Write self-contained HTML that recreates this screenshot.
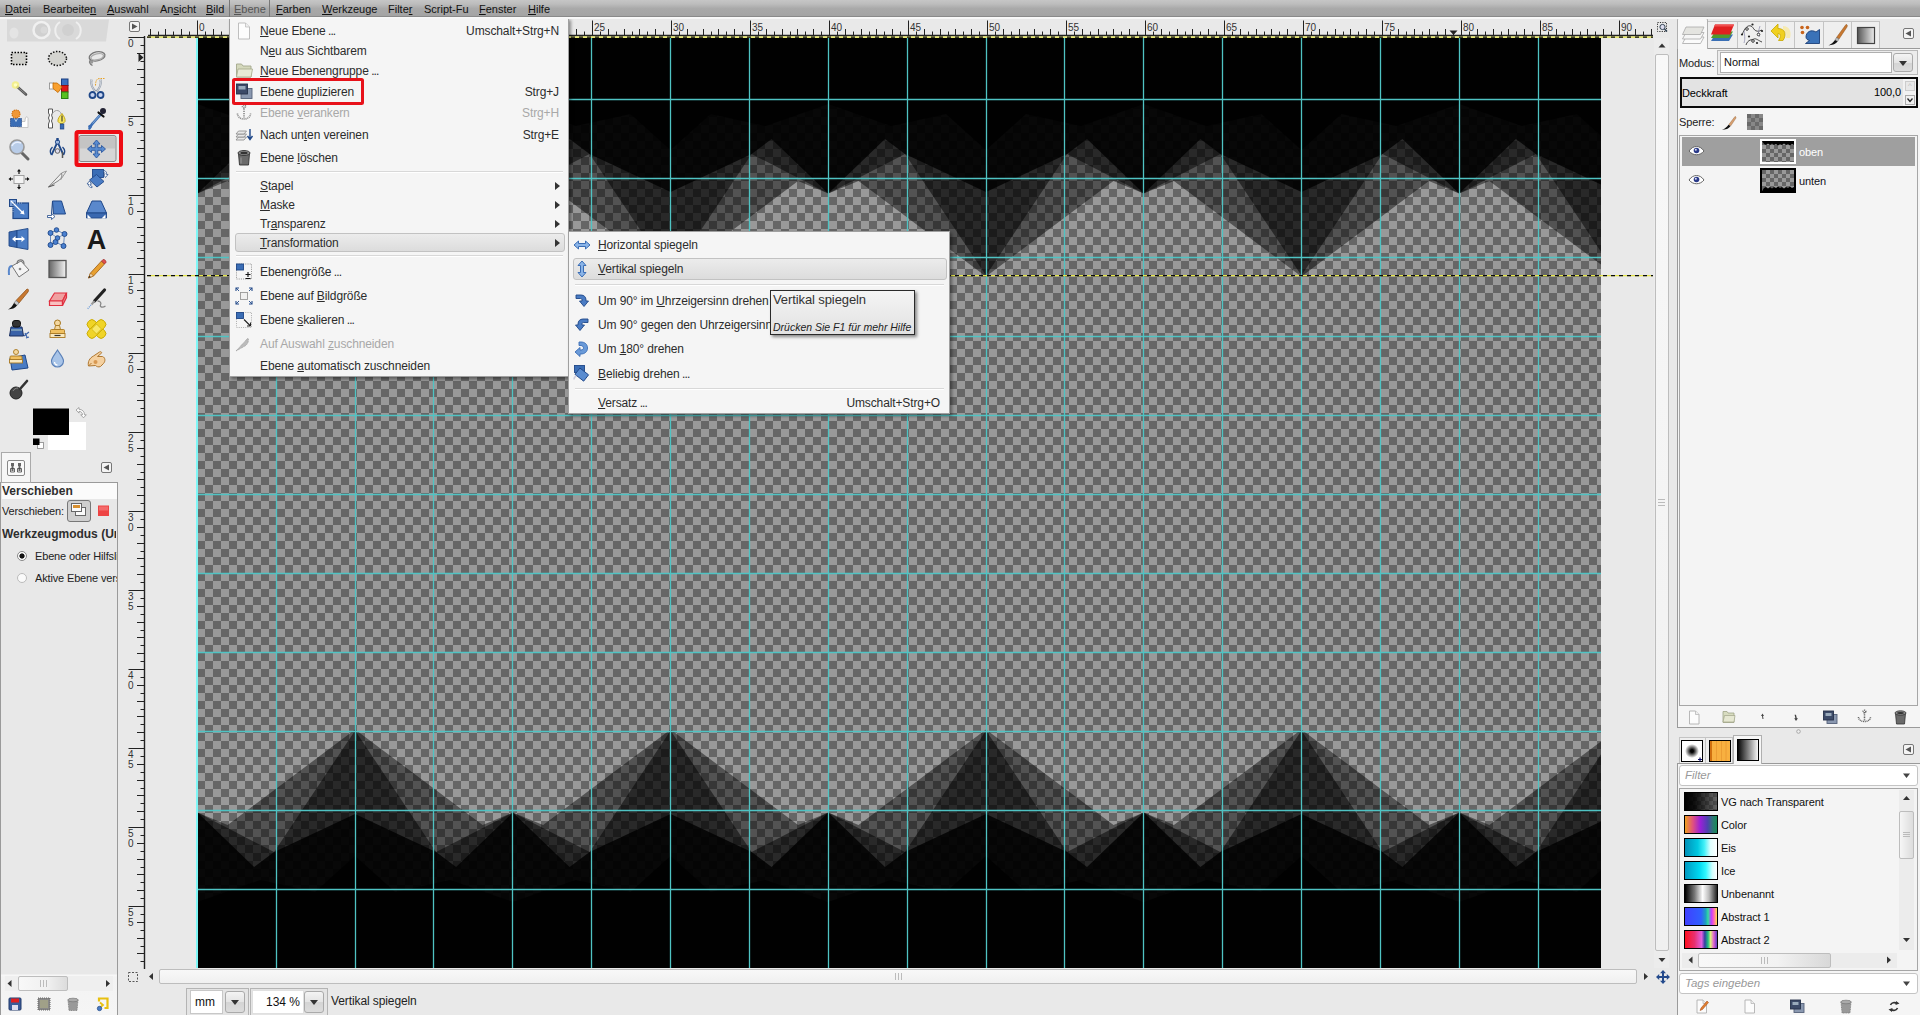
<!DOCTYPE html><html><head><meta charset="utf-8"><title>GIMP</title><style>
*{box-sizing:border-box;margin:0;padding:0}
html,body{width:1920px;height:1015px;overflow:hidden}
body{background:#e9e9e9;font-family:"Liberation Sans",sans-serif;font-size:11px;color:#111;position:relative}
.abs{position:absolute}
u{text-decoration:underline;text-underline-offset:1px}

#mb{position:absolute;left:0;top:0;width:1920px;height:19px;background:linear-gradient(#c6c6c6,#bcbcbc 22%,#a9a9a9 45%,#a4a4a4 84%,#8a8a8a 85%,#8a8a8a 89.5%,#fafafa 90%,#f6f6f6);}
#mb span{position:absolute;top:3px;font-size:11px;color:#111;white-space:pre}
#mb span.op{color:#555}
#mb i{position:absolute;top:0;width:1px;height:17px;background:#777}
.sl{background:linear-gradient(#f8f8f8,#f0f0f0);border:1px solid #bdbdbd;border-radius:2px}
.fr{border:1px solid #b4b4b4;background:#e4e4e4}
.ent{background:#fff;border:1px solid #c8c8c8;color:#111}
.btn{border:1px solid #aaa;border-radius:3px;background:linear-gradient(#f4f4f4,#e4e4e4 50%,#d4d4d4 51%,#dcdcdc)}
.dn{position:absolute;left:50%;top:50%;margin:-2px 0 0 -4px;border:4px solid transparent;border-top:5px solid #333;border-bottom:0}

.lbl{font-size:11px;letter-spacing:-0.1px;white-space:pre;color:#222}

.tl{font-size:11px;letter-spacing:-0.15px;white-space:pre;color:#222}
.tb{white-space:pre;color:#2e2e2e;letter-spacing:0px}

.menu{background:#f5f5f5;border:1px solid #a0a0a0;box-shadow:2px 2px 3px rgba(0,0,0,.4)}
.hl{border:1px solid #c2c2c2;border-radius:3px;background:linear-gradient(#ececec,#dcdcdc)}
.sep{height:2px;border-top:1px solid #d8d8d8;border-bottom:1px solid #fff}
.mi{font-size:12px;letter-spacing:-0.12px;line-height:16px;height:16px;white-space:pre;color:#2c2c2c}
.mi.dis{color:#a8a8a8}
.arr{border:4px solid transparent;border-left:5px solid #333;border-right:0;width:0;height:0}
</style></head><body>
<svg id="img" width="1920" height="1015" viewBox="0 0 1920 1015" style="position:absolute;left:0;top:0">
<defs><pattern id="chk" width="16" height="16" patternUnits="userSpaceOnUse" x="197" y="37"><rect width="16" height="16" fill="#666"/><rect width="8" height="8" fill="#999"/><rect x="8" y="8" width="8" height="8" fill="#999"/></pattern>
<clipPath id="ic"><rect x="198" y="38" width="1403" height="930"/></clipPath>
<g id="lay" fill="#000"><polygon points="39.7,36.0 39.7,276.5 167.2,181.0 197.4,193.5 227.6,181.0 355.1,276.5 482.6,181.0 512.8,193.5 543.1,181.0 670.6,276.5 798.1,181.0 828.3,193.5 858.5,181.0 986.0,276.5 1113.5,181.0 1143.7,193.5 1173.9,181.0 1301.4,276.5 1428.9,181.0 1459.2,193.5 1489.4,181.0 1616.9,276.5 1616.9,36.0" fill-opacity="0.46"/>
<polygon points="39.7,36.0 39.7,275.5 120.7,154.0 197.4,193.5 274.1,154.0 355.1,275.5 436.1,154.0 512.8,193.5 589.6,154.0 670.6,275.5 751.6,154.0 828.3,193.5 905.0,154.0 986.0,275.5 1067.0,154.0 1143.7,193.5 1220.4,154.0 1301.4,275.5 1382.4,154.0 1459.2,193.5 1535.9,154.0 1616.9,275.5 1616.9,36.0" fill-opacity="0.5"/>
<polygon points="39.7,36.0 39.7,192.0 120.7,154.0 140.7,139.0 197.4,193.5 254.1,139.0 274.1,154.0 355.1,192.0 436.1,154.0 456.1,139.0 512.8,193.5 569.6,139.0 589.6,154.0 670.6,192.0 751.6,154.0 771.6,139.0 828.3,193.5 885.0,139.0 905.0,154.0 986.0,192.0 1067.0,154.0 1087.0,139.0 1143.7,193.5 1200.4,139.0 1220.4,154.0 1301.4,192.0 1382.4,154.0 1402.4,139.0 1459.2,193.5 1515.9,139.0 1535.9,154.0 1616.9,192.0 1616.9,36.0" fill-opacity="0.8"/>
<polygon points="39.7,36.0 39.7,150.0 79.7,114.0 134.7,126.0 197.4,104.0 260.1,126.0 315.1,114.0 355.1,150.0 395.1,114.0 450.1,126.0 512.8,104.0 575.6,126.0 630.6,114.0 670.6,150.0 710.6,114.0 765.6,126.0 828.3,104.0 891.0,126.0 946.0,114.0 986.0,150.0 1026.0,114.0 1081.0,126.0 1143.7,104.0 1206.4,126.0 1261.4,114.0 1301.4,150.0 1341.4,114.0 1396.4,126.0 1459.2,104.0 1521.9,126.0 1576.9,114.0 1616.9,150.0 1616.9,36.0" fill-opacity="0.8"/></g></defs>
<g clip-path="url(#ic)">
<rect x="198" y="38" width="1403" height="930" fill="url(#chk)"/>
<use href="#lay"/>
<use href="#lay" transform="translate(0,1006) scale(1,-1)"/>
<path d="M276.5 38V968M355.5 38V968M433.5 38V968M512.5 38V968M591.5 38V968M670.5 38V968M749.5 38V968M828.5 38V968M907.5 38V968M986.5 38V968M1064.5 38V968M1143.5 38V968M1222.5 38V968M1301.5 38V968M1380.5 38V968M1459.5 38V968M1538.5 38V968M198 99.5H1601M198 178.5H1601M198 257.5H1601M198 336.5H1601M198 415.5H1601M198 494.5H1601M198 573.5H1601M198 652.5H1601M198 731.5H1601M198 810.5H1601M198 889.5H1601" stroke="#4fc3c3" stroke-width="1.3" fill="none"/>
</g>
<rect x="196" y="38" width="2" height="930" fill="#7ef6f6"/>
</svg>
<svg class="abs" style="left:0;top:0" width="1920" height="1015" viewBox="0 0 1920 1015">
<path d="M150.5 29V35M158.5 31.5V35M165.5 29V35M173.5 31.5V35M181.5 29V35M189.5 31.5V35M197.5 20.5V35M205.5 31.5V35M213.5 29V35M221.5 31.5V35M229.5 29V35M237.5 31.5V35M244.5 29V35M252.5 31.5V35M260.5 29V35M268.5 31.5V35M276.5 20.5V35M284.5 31.5V35M292.5 29V35M300.5 31.5V35M308.5 29V35M316.5 31.5V35M323.5 29V35M331.5 31.5V35M339.5 29V35M347.5 31.5V35M355.5 20.5V35M363.5 31.5V35M371.5 29V35M379.5 31.5V35M387.5 29V35M395.5 31.5V35M402.5 29V35M410.5 31.5V35M418.5 29V35M426.5 31.5V35M434.5 20.5V35M442.5 31.5V35M450.5 29V35M458.5 31.5V35M466.5 29V35M474.5 31.5V35M481.5 29V35M489.5 31.5V35M497.5 29V35M505.5 31.5V35M513.5 20.5V35M521.5 31.5V35M529.5 29V35M537.5 31.5V35M545.5 29V35M553.5 31.5V35M560.5 29V35M568.5 31.5V35M576.5 29V35M584.5 31.5V35M592.5 20.5V35M600.5 31.5V35M608.5 29V35M616.5 31.5V35M624.5 29V35M632.5 31.5V35M639.5 29V35M647.5 31.5V35M655.5 29V35M663.5 31.5V35M671.5 20.5V35M679.5 31.5V35M687.5 29V35M695.5 31.5V35M703.5 29V35M711.5 31.5V35M718.5 29V35M726.5 31.5V35M734.5 29V35M742.5 31.5V35M750.5 20.5V35M758.5 31.5V35M766.5 29V35M774.5 31.5V35M782.5 29V35M790.5 31.5V35M797.5 29V35M805.5 31.5V35M813.5 29V35M821.5 31.5V35M829.5 20.5V35M837.5 31.5V35M845.5 29V35M853.5 31.5V35M861.5 29V35M869.5 31.5V35M876.5 29V35M884.5 31.5V35M892.5 29V35M900.5 31.5V35M908.5 20.5V35M916.5 31.5V35M924.5 29V35M932.5 31.5V35M940.5 29V35M948.5 31.5V35M955.5 29V35M963.5 31.5V35M971.5 29V35M979.5 31.5V35M987.5 20.5V35M995.5 31.5V35M1003.5 29V35M1011.5 31.5V35M1019.5 29V35M1027.5 31.5V35M1034.5 29V35M1042.5 31.5V35M1050.5 29V35M1058.5 31.5V35M1066.5 20.5V35M1074.5 31.5V35M1082.5 29V35M1090.5 31.5V35M1098.5 29V35M1106.5 31.5V35M1113.5 29V35M1121.5 31.5V35M1129.5 29V35M1137.5 31.5V35M1145.5 20.5V35M1153.5 31.5V35M1161.5 29V35M1169.5 31.5V35M1177.5 29V35M1185.5 31.5V35M1192.5 29V35M1200.5 31.5V35M1208.5 29V35M1216.5 31.5V35M1224.5 20.5V35M1232.5 31.5V35M1240.5 29V35M1248.5 31.5V35M1256.5 29V35M1264.5 31.5V35M1271.5 29V35M1279.5 31.5V35M1287.5 29V35M1295.5 31.5V35M1303.5 20.5V35M1311.5 31.5V35M1319.5 29V35M1327.5 31.5V35M1335.5 29V35M1343.5 31.5V35M1350.5 29V35M1358.5 31.5V35M1366.5 29V35M1374.5 31.5V35M1382.5 20.5V35M1390.5 31.5V35M1398.5 29V35M1406.5 31.5V35M1414.5 29V35M1422.5 31.5V35M1429.5 29V35M1437.5 31.5V35M1445.5 29V35M1453.5 31.5V35M1461.5 20.5V35M1469.5 31.5V35M1477.5 29V35M1485.5 31.5V35M1493.5 29V35M1501.5 31.5V35M1508.5 29V35M1516.5 31.5V35M1524.5 29V35M1532.5 31.5V35M1540.5 20.5V35M1548.5 31.5V35M1556.5 29V35M1564.5 31.5V35M1572.5 29V35M1580.5 31.5V35M1587.5 29V35M1595.5 31.5V35M1603.5 29V35M1611.5 31.5V35M1619.5 20.5V35M1627.5 31.5V35M1635.5 29V35M1643.5 31.5V35M1651.5 29V35M128.5 37.5H144M140.5 45.5H144M137 53.5H144M140.5 61.5H144M137 69.5H144M140.5 77.5H144M137 84.5H144M140.5 92.5H144M137 100.5H144M140.5 108.5H144M128.5 116.5H144M140.5 124.5H144M137 132.5H144M140.5 140.5H144M137 148.5H144M140.5 156.5H144M137 163.5H144M140.5 171.5H144M137 179.5H144M140.5 187.5H144M128.5 195.5H144M140.5 203.5H144M137 211.5H144M140.5 219.5H144M137 227.5H144M140.5 235.5H144M137 242.5H144M140.5 250.5H144M137 258.5H144M140.5 266.5H144M128.5 274.5H144M140.5 282.5H144M137 290.5H144M140.5 298.5H144M137 306.5H144M140.5 314.5H144M137 321.5H144M140.5 329.5H144M137 337.5H144M140.5 345.5H144M128.5 353.5H144M140.5 361.5H144M137 369.5H144M140.5 377.5H144M137 385.5H144M140.5 393.5H144M137 400.5H144M140.5 408.5H144M137 416.5H144M140.5 424.5H144M128.5 432.5H144M140.5 440.5H144M137 448.5H144M140.5 456.5H144M137 464.5H144M140.5 472.5H144M137 479.5H144M140.5 487.5H144M137 495.5H144M140.5 503.5H144M128.5 511.5H144M140.5 519.5H144M137 527.5H144M140.5 535.5H144M137 543.5H144M140.5 551.5H144M137 558.5H144M140.5 566.5H144M137 574.5H144M140.5 582.5H144M128.5 590.5H144M140.5 598.5H144M137 606.5H144M140.5 614.5H144M137 622.5H144M140.5 630.5H144M137 637.5H144M140.5 645.5H144M137 653.5H144M140.5 661.5H144M128.5 669.5H144M140.5 677.5H144M137 685.5H144M140.5 693.5H144M137 701.5H144M140.5 709.5H144M137 716.5H144M140.5 724.5H144M137 732.5H144M140.5 740.5H144M128.5 748.5H144M140.5 756.5H144M137 764.5H144M140.5 772.5H144M137 780.5H144M140.5 788.5H144M137 795.5H144M140.5 803.5H144M137 811.5H144M140.5 819.5H144M128.5 827.5H144M140.5 835.5H144M137 843.5H144M140.5 851.5H144M137 859.5H144M140.5 867.5H144M137 874.5H144M140.5 882.5H144M137 890.5H144M140.5 898.5H144M128.5 906.5H144M140.5 914.5H144M137 922.5H144M140.5 930.5H144M137 938.5H144M140.5 946.5H144M137 953.5H144M140.5 961.5H144" stroke="#222" stroke-width="1" fill="none"/>
<path d="M148 35.5H1653M144.5 36V969" stroke="#222" stroke-width="1.4" fill="none"/>
<g font-family="Liberation Sans, sans-serif" font-size="10" fill="#333">
<text x="199.0" y="31">0</text>
<text x="278.0" y="31">5</text>
<text x="357.0" y="31">10</text>
<text x="436.0" y="31">15</text>
<text x="515.0" y="31">20</text>
<text x="594.0" y="31">25</text>
<text x="673.0" y="31">30</text>
<text x="752.0" y="31">35</text>
<text x="831.0" y="31">40</text>
<text x="910.0" y="31">45</text>
<text x="989.0" y="31">50</text>
<text x="1068.0" y="31">55</text>
<text x="1147.0" y="31">60</text>
<text x="1226.0" y="31">65</text>
<text x="1305.0" y="31">70</text>
<text x="1384.0" y="31">75</text>
<text x="1463.0" y="31">80</text>
<text x="1542.0" y="31">85</text>
<text x="1621.0" y="31">90</text>
<text x="128" y="46.5">0</text>
<text x="128" y="125.5">5</text>
<text x="128" y="204.5">1</text>
<text x="128" y="214.5">0</text>
<text x="128" y="283.5">1</text>
<text x="128" y="293.5">5</text>
<text x="128" y="362.5">2</text>
<text x="128" y="372.5">0</text>
<text x="128" y="441.5">2</text>
<text x="128" y="451.5">5</text>
<text x="128" y="520.5">3</text>
<text x="128" y="530.5">0</text>
<text x="128" y="599.5">3</text>
<text x="128" y="609.5">5</text>
<text x="128" y="678.5">4</text>
<text x="128" y="688.5">0</text>
<text x="128" y="757.5">4</text>
<text x="128" y="767.5">5</text>
<text x="128" y="836.5">5</text>
<text x="128" y="846.5">0</text>
<text x="128" y="915.5">5</text>
<text x="128" y="925.5">5</text>
</g>
<path d="M147 37H1653M147 275.5H1653" stroke="#e6e648" stroke-width="1.25" fill="none"/>
<path d="M147 37H1653M147 275.5H1653" stroke="#0a0a0a" stroke-width="1.25" stroke-dasharray="4 4" fill="none"/>
<path d="M1449.5 30.5h8l-4 4.500zM138.5 53v9l5-4.5z" fill="#222"/>
<rect x="129.5" y="21.5" width="10" height="10" rx="1.5" fill="#f2f2f2" stroke="#777"/><path d="M132 23.5v6l5.5-3z" fill="#555"/>
<rect x="1657.5" y="22.5" width="9" height="9" fill="none" stroke="#333" stroke-dasharray="1.2 1.2"/><circle cx="1662.5" cy="27" r="2.6" fill="#dde" stroke="#345" stroke-width="1"/><path d="M1664.5 29l2.5 2.5" stroke="#345" stroke-width="1.6"/>
<rect x="128.5" y="972.5" width="9" height="9" fill="none" stroke="#555" stroke-dasharray="2 1.5"/>
</svg>
<div class="abs" style="left:1654px;top:38px;width:15px;height:930px;background:#ececec"></div>
<div class="abs sl" style="left:1655px;top:54px;width:14px;height:897px"></div>
<svg class="abs" style="left:0;top:0" width="1920" height="1015"><path d="M1658.5 47.5h7l-3.5-4zM1658.5 958h7l-3.5 4zM153 973v7l-4-3.5zM1644 973v7l4-3.500z" fill="#333"/>
<path d="M1663 970l3 3.200h-2v2.800h2.800v-2l3.200 3-3.200 3v-2h-2.800v2.800h2l-3 3.200-3-3.200h2v-2.800h-2.800v2l-3.200-3 3.200-3v2h2.800v-2.800h-2z" fill="#244a8c"/>
</svg>
<div class="abs sl" style="left:159px;top:969px;width:1478px;height:15px"></div>
<div class="abs" style="left:895px;top:973px;width:7px;height:7px;border-left:1px solid #bbb;border-right:1px solid #bbb"><div style="margin-left:2px;width:1px;height:7px;background:#bbb"></div></div>
<div class="abs" style="left:1658px;top:499px;width:7px;height:7px;border-top:1px solid #bbb;border-bottom:1px solid #bbb"><div style="margin-top:2px;height:1px;background:#bbb"></div></div>
<div class="abs fr" style="left:186px;top:988px;width:63px;height:30px"></div>
<div class="abs ent" style="left:190px;top:990px;width:33px;height:24px;line-height:22px;padding-left:4px;font-size:12px">mm</div>
<div class="abs btn" style="left:225px;top:991px;width:20px;height:22px"><b class="dn"></b></div>
<div class="abs fr" style="left:250px;top:988px;width:78px;height:30px"></div>
<div class="abs ent" style="left:252px;top:990px;width:52px;height:24px;line-height:22px;text-align:right;padding-right:3px;font-size:12px;border-color:#e0e0e0">134 %</div>
<div class="abs btn" style="left:304px;top:991px;width:20px;height:22px"><b class="dn"></b></div>
<div class="abs" style="left:331px;top:994px;font-size:12px;letter-spacing:-0.1px;color:#222">Vertikal spiegeln</div>
<div class="abs" style="left:1670px;top:19px;width:250px;height:996px;background:#e9e9e9"></div>
<div class="abs" style="left:1677px;top:48px;width:243px;height:680px;background:#f5f5f5;border:1px solid #9a9a9a;border-right:0"></div>
<div class="abs" style="left:1677px;top:18px;width:31px;height:31px;background:#f7f7f7;border:1px solid #b0b0b0;border-bottom:0;border-radius:2px 2px 0 0"></div>
<div class="abs" style="left:1708.0px;top:21px;width:29.5px;height:27px;background:#efefef;border:1px solid #c4c4c4;border-left:0;border-bottom:0"></div>
<div class="abs" style="left:1737.5px;top:21px;width:28.0px;height:27px;background:#efefef;border:1px solid #c4c4c4;border-left:0;border-bottom:0"></div>
<div class="abs" style="left:1765.5px;top:21px;width:29.5px;height:27px;background:#efefef;border:1px solid #c4c4c4;border-left:0;border-bottom:0"></div>
<div class="abs" style="left:1795.0px;top:21px;width:29.0px;height:27px;background:#efefef;border:1px solid #c4c4c4;border-left:0;border-bottom:0"></div>
<div class="abs" style="left:1824.0px;top:21px;width:27.5px;height:27px;background:#efefef;border:1px solid #c4c4c4;border-left:0;border-bottom:0"></div>
<div class="abs" style="left:1851.5px;top:21px;width:28.5px;height:27px;background:#efefef;border:1px solid #c4c4c4;border-left:0;border-bottom:0"></div>
<div class="abs lbl" style="left:1679px;top:57px">Modus:</div>
<div class="abs fr" style="left:1717px;top:50px;width:201px;height:25px;background:#ececec;border-color:#b8b8b8"></div>
<div class="abs ent" style="left:1720px;top:52px;width:172px;height:21px;line-height:19px;padding-left:3px;border-color:#b0b0b0">Normal</div>
<div class="abs btn" style="left:1893px;top:53px;width:20px;height:19px"><b class="dn"></b></div>
<div class="abs" style="left:1680px;top:77px;width:238px;height:31px;background:#e3e3e3;border:2px solid #0a0a0a"></div>
<div class="abs lbl" style="left:1682px;top:87px;color:#000">Deckkraft</div>
<div class="abs lbl" style="left:1850px;top:86px;width:51px;text-align:right;color:#000">100,0</div>
<div class="abs" style="left:1903px;top:79px;width:13px;height:27px;background:#f2f2f2"></div>
<div class="abs" style="left:1905px;top:81px;width:10px;height:10px;border:1px solid #ccc;background:#e8e8e8;font-size:8px;line-height:8px;color:#bbb;text-align:center">^</div>
<div class="abs" style="left:1905px;top:95px;width:10px;height:10px;border:1px solid #aaa;background:#f0f0f0"><svg width="8" height="8" style="display:block"><path d="M1.500 2.500l2.500 3 2.500-3" stroke="#222" stroke-width="1.300" fill="none"/></svg></div>
<div class="abs lbl" style="left:1679px;top:116px">Sperre:</div>
<div class="abs" style="left:1679px;top:135px;width:239px;height:571px;background:#f4f4f4;border:1px solid #a6a6a6"></div>
<div class="abs" style="left:1682px;top:137px;width:233px;height:29px;background:#9f9f9f"></div>
<div class="abs lbl" style="left:1799px;top:146px;color:#fff">oben</div>
<div class="abs lbl" style="left:1799px;top:175px;color:#112">unten</div>
<div class="abs" style="left:1677px;top:763px;width:243px;height:252px;background:#f5f5f5;border:1px solid #9a9a9a;border-right:0;border-bottom:0"></div>
<div class="abs" style="left:1679px;top:737px;width:27px;height:26px;background:#efefef;border:1px solid #c4c4c4;border-bottom:0"></div>
<div class="abs" style="left:1706px;top:737px;width:27px;height:26px;background:#efefef;border:1px solid #c4c4c4;border-bottom:0;border-left:0"></div>
<div class="abs" style="left:1733px;top:735px;width:29px;height:29px;background:#f7f7f7;border:1px solid #b0b0b0;border-bottom:0"></div>
<div class="abs ent" style="left:1679px;top:765px;width:239px;height:21px;line-height:19px;padding-left:5px;border-radius:3px;border-color:#c4c4c4;font-style:italic;color:#999;font-size:11.5px">Filter</div>
<div class="abs" style="left:1679px;top:788px;width:239px;height:183px;background:#f4f4f4;border:1px solid #a6a6a6"></div>
<div class="abs" style="left:1684px;top:792px;width:34px;height:19px;border:1px solid #000;background:linear-gradient(90deg,#000,rgba(0,0,0,.9) 30%,rgba(60,60,60,.55) 100%),repeating-conic-gradient(#666 0 25%,#999 0 50%) 0 0/8px 8px"></div>
<div class="abs lbl" style="left:1721px;top:796px;color:#111">VG nach Transparent</div>
<div class="abs" style="left:1684px;top:815px;width:34px;height:19px;border:1px solid #000;background:linear-gradient(90deg,#f0a020,#e05080 25%,#9a20d8 48%,#5040b0 70%,#2a7a70 88%,#1a8a58)"></div>
<div class="abs lbl" style="left:1721px;top:819px;color:#111">Color</div>
<div class="abs" style="left:1684px;top:838px;width:34px;height:19px;border:1px solid #000;background:linear-gradient(90deg,#0090b8,#00c8e0 40%,#40f0f8 60%,#e0ffff 80%,#fff)"></div>
<div class="abs lbl" style="left:1721px;top:842px;color:#111">Eis</div>
<div class="abs" style="left:1684px;top:861px;width:34px;height:19px;border:1px solid #000;background:linear-gradient(90deg,#0098c0,#00d8f0 45%,#30f8ff 65%,#d0ffff 85%,#fff)"></div>
<div class="abs lbl" style="left:1721px;top:865px;color:#111">Ice</div>
<div class="abs" style="left:1684px;top:884px;width:34px;height:19px;border:1px solid #000;background:linear-gradient(90deg,#000,#777 30%,#fff 55%,#bbb 75%,#222)"></div>
<div class="abs lbl" style="left:1721px;top:888px;color:#111">Unbenannt</div>
<div class="abs" style="left:1684px;top:907px;width:34px;height:19px;border:1px solid #000;background:linear-gradient(90deg,#4040ff,#3060ff 50%,#20a0c0 65%,#30e0a0 72%,#c040ff 82%,#ff60c0 90%,#ffe040)"></div>
<div class="abs lbl" style="left:1721px;top:911px;color:#111">Abstract 1</div>
<div class="abs" style="left:1684px;top:930px;width:34px;height:19px;border:1px solid #000;background:linear-gradient(90deg,#ff1020,#e83070 30%,#e060e0 52%,#3040a0 62%,#20c080 72%,#e0f080 80%,#e060d0 90%,#6040c0)"></div>
<div class="abs lbl" style="left:1721px;top:934px;color:#111">Abstract 2</div>
<div class="abs" style="left:1899px;top:790px;width:15px;height:160px;background:#ececec"></div>
<div class="abs sl" style="left:1899px;top:811px;width:15px;height:48px;background:linear-gradient(90deg,#f6f6f6,#dcdcdc)"></div>
<div class="abs" style="left:1903px;top:832px;width:7px;height:5px;border-top:1px solid #bbb;border-bottom:1px solid #bbb"><div style="margin-top:1px;height:1px;background:#bbb"></div></div>
<div class="abs" style="left:1682px;top:953px;width:215px;height:15px;background:#ececec"></div>
<div class="abs sl" style="left:1698px;top:953px;width:133px;height:15px;background:linear-gradient(90deg,#f8f8f8,#f2f2f2 60%,#d8d8d8)"></div>
<div class="abs" style="left:1761px;top:957px;width:7px;height:7px;border-left:1px solid #bbb;border-right:1px solid #bbb"><div style="margin-left:2px;width:1px;height:7px;background:#bbb"></div></div>
<div class="abs ent" style="left:1679px;top:973px;width:239px;height:21px;line-height:19px;padding-left:5px;border-radius:3px;border-color:#c4c4c4;font-style:italic;color:#999;font-size:11.5px">Tags eingeben</div>
<svg class="abs" style="left:0;top:0" width="1920" height="1015" viewBox="0 0 1920 1015"><defs>
<linearGradient id="gbw" x1="0" x2="1"><stop offset="0" stop-color="#000"/><stop offset="1" stop-color="#fff"/></linearGradient>
<linearGradient id="ggr" x1="0" x2="1"><stop offset="0" stop-color="#555"/><stop offset="1" stop-color="#eee"/></linearGradient>
<radialGradient id="gbr"><stop offset="0.2" stop-color="#000"/><stop offset="1" stop-color="#fff"/></radialGradient>
</defs><g stroke="#a8a8a8" stroke-width="0.8"><path d="M1682.5 43.500l3.500-6.500h18l-3.500 6.500z" fill="#fbfbfb"/><path d="M1682.5 39l3.500-6.500h18l-3.500 6.500z" fill="#f6f6f6"/><path d="M1682.5 34.500l3.500-7.500h18l-3.500 7.500z" fill="#e4e4e0"/></g><path d="M1711 41l4-6.500h18l-4 6.500z" fill="#3a6fb5"/><path d="M1711 38l4-6.500h18l-4 6.500z" fill="#4e9a2e"/><path d="M1711 34.500l4-10h19l-4 10z" fill="#e02020"/><path d="M1715 24.500h19l-0.800 2h-19z" fill="#f05050"/><path d="M1742 35c3-8 6-10 9-9s3 8 11 4M1746 45c2-6 6-5 8-6s5 2 8 3" fill="none" stroke="#333" stroke-width="0.9"/><path d="M1744 31c1 6 1 9 0 12M1760 26c-2 6-2 9 0 11" fill="none" stroke="#88a" stroke-width="0.7"/><g fill="#fff" stroke="#222" stroke-width="0.9"><circle cx="1747" cy="29" r="1.300"/><circle cx="1758.500" cy="34.500" r="1.300"/><circle cx="1753" cy="41" r="1.300"/></g><g fill="#222"><circle cx="1742" cy="34.500" r="1.100"/><circle cx="1752.500" cy="24.500" r="1.100"/><circle cx="1762" cy="31" r="1.100"/><circle cx="1749" cy="36.500" r="1.100"/><circle cx="1757" cy="43" r="1.100"/></g><path d="M1783 26c6 0 9 5 7 12h-4c1-4 0-6-3-6z" fill="#f8e8a0" opacity="0.8"/><path d="M1771 31l7-7v4.500c7 0 9 6 5 12h-4.500c3-4 2-7-0.500-7v4.500z" fill="#f0d020" stroke="#c8a800" stroke-width="0.8"/><g fill="#c8641c"><circle cx="1802" cy="27.500" r="1.800"/><circle cx="1807.500" cy="27.500" r="1.800"/><circle cx="1802.500" cy="32.500" r="1.800"/></g><path d="M1806 37c0-5 5-8 10-5l3.500-2.500v14h-14l4-3c-2-0.500-3.500-1.500-3.500-3.500z" fill="#3a72b8" stroke="#1c3f78" stroke-width="0.9"/><path d="M1846 24.500c1.500 0 1.500 1 1 2.500l-8 12-2.500-1.500z" fill="#c87830" stroke="#8a4a10" stroke-width="0.5"/><path d="M1836.500 37.500l2.500 1.500-1.500 2.500-2.500-1.500z" fill="#bbb" stroke="#666" stroke-width="0.5"/><path d="M1835 40l2.500 1.500c-2 3-6 3.500-9 4 3-1.500 4.500-3 6.500-5.500z" fill="#111"/><rect x="1857.500" y="27.500" width="17" height="16" fill="url(#ggr)" stroke="#444" stroke-width="1.200"/><rect x="1903.500" y="28.5" width="10" height="10" rx="1.500" fill="#f4f4f4" stroke="#777"/><path d="M1911 30.5v6l-5.500-3z" fill="#555"/><rect x="1903.500" y="744.5" width="10" height="10" rx="1.500" fill="#f4f4f4" stroke="#777"/><path d="M1911 746.5v6l-5.500-3z" fill="#555"/><path d="M1735 116.500c1 0 1.200 0.800 0.800 1.800l-5 7.500-2-1.200z" fill="#d8a070" stroke="#8a5a30" stroke-width="0.4"/><path d="M1728.500 124.800l2 1.200c-1.800 3-5 3.500-8.500 4 3-1.500 4.500-2.500 6.500-5.200z" fill="#111"/><g><rect x="1747" y="114" width="16" height="16" fill="#888"/><path d="M1747 114h4v4h-4zM1755 114h4v4h-4zM1751 118h4v4h-4zM1759 118h4v4h-4zM1747 122h4v4h-4zM1755 122h4v4h-4zM1751 126h4v4h-4zM1759 126h4v4h-4z" fill="#6a6a6a"/></g><path d="M1689 151 c4-6 11-6 15 0c-4 5-11 5-15 0z" fill="#fff" stroke="#666" stroke-width="1"/><circle cx="1696.500" cy="150.5" r="2.800" fill="#2a3a8a"/><circle cx="1695.800" cy="149.8" r="1" fill="#dde"/><path d="M1689 180 c4-6 11-6 15 0c-4 5-11 5-15 0z" fill="#fff" stroke="#666" stroke-width="1"/><circle cx="1696.500" cy="179.5" r="2.800" fill="#2a3a8a"/><circle cx="1695.800" cy="178.8" r="1" fill="#dde"/><rect x="1760" y="139" width="36" height="25" fill="#fff"/><rect x="1762" y="141" width="32" height="21" fill="#999"/><path d="M1762 141h4v4h-4zM1770 141h4v4h-4zM1778 141h4v4h-4zM1786 141h4v4h-4zM1766 145h4v4h-4zM1774 145h4v4h-4zM1782 145h4v4h-4zM1790 145h4v4h-4zM1762 149h4v4h-4zM1770 149h4v4h-4zM1778 149h4v4h-4zM1786 149h4v4h-4zM1766 153h4v4h-4zM1774 153h4v4h-4zM1782 153h4v4h-4zM1790 153h4v4h-4zM1762 157h4v4h-4zM1770 157h4v4h-4zM1778 157h4v4h-4zM1786 157h4v4h-4zM1766 161h4v1h-4zM1774 161h4v1h-4zM1782 161h4v1h-4zM1790 161h4v1h-4z" fill="#666"/><path d="M1762 141h32v4l-2-1-2 1.500-2-1.500-2 1-2-1.500-2 1.500-2-1-2 1.500-2-1.500-2 1-2-1.500-2 1.500-2-1.500-2 1.500-2-1z" fill="#000"/><rect x="1760" y="168" width="36" height="25" fill="#000"/><rect x="1762" y="170" width="32" height="21" fill="#999"/><path d="M1762 170h4v4h-4zM1770 170h4v4h-4zM1778 170h4v4h-4zM1786 170h4v4h-4zM1766 174h4v4h-4zM1774 174h4v4h-4zM1782 174h4v4h-4zM1790 174h4v4h-4zM1762 178h4v4h-4zM1770 178h4v4h-4zM1778 178h4v4h-4zM1786 178h4v4h-4zM1766 182h4v4h-4zM1774 182h4v4h-4zM1782 182h4v4h-4zM1790 182h4v4h-4zM1762 186h4v4h-4zM1770 186h4v4h-4zM1778 186h4v4h-4zM1786 186h4v4h-4zM1766 190h4v1h-4zM1774 190h4v1h-4zM1782 190h4v1h-4zM1790 190h4v1h-4z" fill="#666"/><path d="M1762 191h32v-4l-2 1-2-1.500-2 1.500-2-1-2 1.500-2-1.500-2 1-2-1.500-2 1.500-2-1-2 1.500-2-1.500-2 1.500-2-1.500-2 1z" fill="#000"/><path d="M1689.5 711.0h6l3.500 3.500v9.500h-9.500z" fill="#fcfcfc" stroke="#b0b0b0" stroke-width="0.900"/><path d="M1695.5 711.0v3.500h3.500" fill="#eee" stroke="#b0b0b0" stroke-width="0.700"/><path d="M1723 711.500h4l1 1.500h6v9.500h-11z" fill="#d8dcc0" stroke="#a0a488" stroke-width="0.800"/><path d="M1724.500 715.500h10.500l-1 6.500h-11z" fill="#e6e8d2" stroke="#a0a488" stroke-width="0.700"/><path d="M1762.500 713.500l1.500 2.500h-1l0.500 3h-1l-0.500-3h-1z" fill="#444"/><path d="M1796 721l-1.800-2.800h1.200l-0.800-3.500h1.400l0.800 3.500h1.200z" fill="#444"/><rect x="1827.0" y="714.5" width="10" height="9" fill="#8a98b0" stroke="#56627a" stroke-width="0.900"/><rect x="1823.5" y="711.0" width="10" height="9" fill="#3c4a68" stroke="#26324a" stroke-width="0.900"/><rect x="1825.5" y="713.0" width="6" height="3" fill="#9ab"/><g fill="none" stroke="#666" stroke-width="1.500" stroke-dasharray="1 0.700"><path d="M1864.500 712v9M1858.500 717c0 3 3 4.500 6 4.500s6-1.500 6-4.500"/><circle cx="1864.500" cy="711.500" r="1.300"/></g><path d="M1895.5 713.5h10l-1 10.500h-8z" fill="#6a6a6a" stroke="#333" stroke-width="0.800"/><ellipse cx="1900.5" cy="713.0" rx="5.500" ry="2.200" fill="#888" stroke="#333" stroke-width="0.800"/><ellipse cx="1900.5" cy="713.0" rx="3.300" ry="1" fill="#333"/><circle cx="1798.500" cy="731.500" r="1.800" fill="#eee" stroke="#999" stroke-width="0.800"/><rect x="1681.500" y="740.500" width="21" height="21" fill="#fff" stroke="#000"/><circle cx="1692" cy="751" r="7" fill="url(#gbr)"/><path d="M1698 759.500h4M1700 757.500v4" stroke="#116" stroke-width="1.200"/><rect x="1709.500" y="740.500" width="21" height="21" fill="#f8b040" stroke="#000"/><path d="M1711 741v20" stroke="#d07010" stroke-width="2"/><path d="M1716.500 741v20M1721.500 741v20M1726 741v20" stroke="#e89830" stroke-width="0.800"/><rect x="1737.500" y="739.500" width="21" height="21" fill="url(#gbw)" stroke="#000"/><path d="M1903 773.500h7l-3.500 4.500zM1903 981.500h7l-3.500 4.500z" fill="#444"/><path d="M1903 800h7l-3.500-4zM1903 938h7l-3.500 4zM1692.500 956.500v7l-4-3.500zM1887 956.500v7l4-3.500z" fill="#333"/><path d="M1697.0 1000.0h6l3.500 3.500v9.500h-9.500z" fill="#fcfcfc" stroke="#b0b0b0" stroke-width="0.900"/><path d="M1703.0 1000.0v3.500h3.500" fill="#eee" stroke="#b0b0b0" stroke-width="0.700"/><path d="M1707 1001l1.500 1.500-6 7-2.500 1 1-2.500z" fill="#e08030" stroke="#a04010" stroke-width="0.500"/><path d="M1745.0 1000.0h6l3.500 3.500v9.500h-9.500z" fill="#fcfcfc" stroke="#b0b0b0" stroke-width="0.900"/><path d="M1751.0 1000.0v3.500h3.500" fill="#eee" stroke="#b0b0b0" stroke-width="0.700"/><rect x="1794.0" y="1003.5" width="10" height="9" fill="#8a98b0" stroke="#56627a" stroke-width="0.900"/><rect x="1790.5" y="1000.0" width="10" height="9" fill="#3c4a68" stroke="#26324a" stroke-width="0.900"/><rect x="1792.5" y="1002.0" width="6" height="3" fill="#9ab"/><path d="M1841.0 1002.0h10l-1 11h-8z" fill="#999" stroke="#777" stroke-width="0.800" stroke-dasharray="1 0.700"/><ellipse cx="1846.0" cy="1002.0" rx="5.300" ry="1.800" fill="#aaa" stroke="#777" stroke-width="0.700"/><g fill="none" stroke="#333" stroke-width="1.600"><path d="M1890.500 1005c1-2.500 4-3 6.500-1.500"/><path d="M1897.500 1008c-1 2.500-4 3-6.500 1.500"/></g><path d="M1896 1001l3.500 2.500-4 1.500zM1892 1012l-3.500-2.500 4-1.500z" fill="#333"/></svg>
<div class="abs" style="left:0;top:19px;width:125px;height:996px;background:#e9e9e9"></div>
<div class="abs" style="left:0px;top:482px;width:118px;height:533px;background:linear-gradient(#e8e8e8 0,#e8e8e8 491px,#f8f8f8 492px,#f3f3f3 494px,#f5f5f5);border:1px solid #9a9a9a;border-bottom:0"></div>
<div class="abs" style="left:2px;top:483px;width:115px;height:16px;background:#fbfbfb"></div>
<svg class="abs" style="left:0;top:0" width="125" height="1015" viewBox="0 0 125 1015"><defs><linearGradient id="tgr" x1="0" x2="1"><stop offset="0" stop-color="#666"/><stop offset="1" stop-color="#f4f4f4"/></linearGradient></defs><path d="M7 19.500h102l-3 22h-99z" fill="#d9d9d9"/><circle cx="41.500" cy="30" r="8" fill="#d0d0d0" stroke="#f0f0f0" stroke-width="2.500"/><circle cx="44" cy="30" r="3.500" fill="#d9d9d9"/><path d="M60 22a10 10 0 0 0 0 17M76 22a10 10 0 0 1 0 17" fill="none" stroke="#efefef" stroke-width="2"/><circle cx="68" cy="30" r="6" fill="#d0d0d0"/><ellipse cx="14" cy="33" rx="4.500" ry="5.500" fill="#e4e4e4"/><rect x="79" y="135.500" width="37" height="26" rx="2" fill="#d6d6d6" stroke="#8a8a8a"/><rect x="80" y="136.500" width="35" height="12" fill="#c4c4c4"/><g transform="translate(19,58.5)"><rect x="-7.500" y="-6" width="15" height="12" fill="#d0d0cc" stroke="#000" stroke-width="1.600" stroke-dasharray="1.500 1.500"/></g><g transform="translate(57.5,58.5)"><ellipse rx="9" ry="7" fill="#d4d4d0" stroke="#111" stroke-width="1.500" stroke-dasharray="1.500 1.500"/></g><g transform="translate(96.5,58.5)"><g fill="none" stroke="#777" stroke-width="1.300"><ellipse cx="1" cy="-2" rx="8" ry="4.500" transform="rotate(-12)"/><ellipse cx="1" cy="-1.500" rx="6.500" ry="3" transform="rotate(-12)" stroke="#aaa"/><path d="M-6 1c-2 3 0 5 2 6"/></g><circle cx="-5" cy="3.500" r="1.800" fill="#999"/></g><g transform="translate(19,88.5)"><path d="M-2 -2l9 8" stroke="#555" stroke-width="2.600" stroke-linecap="round"/><path d="M-1.500 -1.500l8 7" stroke="#999" stroke-width="0.800"/><circle cx="-3.500" cy="-3.500" r="3.800" fill="#f4f080" opacity="0.850"/><circle cx="-3.500" cy="-3.500" r="1.800" fill="#ffffc0"/></g><g transform="translate(57.5,88.5)"><rect x="4" y="-9.500" width="6.500" height="6.500" fill="#3a70c0" stroke="#1a3f80"/><rect x="4" y="-3" width="6.500" height="6.500" fill="#e01818" stroke="#901010"/><rect x="4" y="3.500" width="6.500" height="6.500" fill="#58c020" stroke="#2a8010"/><rect x="-8" y="-5.500" width="4" height="6" fill="#fff" stroke="#888" stroke-width="0.800"/><path d="M-4.500 -5.500h4l5 4-4 5.500-5-4z" fill="#f8a030" stroke="#c06800" stroke-width="0.800"/></g><g transform="translate(96.5,88.5)"><path d="M-5 -9c-1 5 1 9 4 12M4 -9c1 5-1 9-4 12" fill="none" stroke="#8a94a4" stroke-width="2"/><path d="M-5 -9c-1 5 1 9 4 12M4 -9c1 5-1 9-4 12" fill="none" stroke="#e8ecf0" stroke-width="0.800"/><path d="M-1 -3c0-4 1-7 4-7h5" fill="none" stroke="#e8a020" stroke-width="1" stroke-dasharray="1.500 1"/><circle cx="-4" cy="6.500" r="3" fill="#c8d4f0" stroke="#1f4788" stroke-width="1.800"/><circle cx="4" cy="6.500" r="3" fill="#c8d4f0" stroke="#1f4788" stroke-width="1.800"/></g><g transform="translate(19,118.5)"><path d="M-1 3h7c0-4 2-7 3-3v9h-10z" fill="#fff" stroke="#bbb" stroke-width="0.800"/><rect x="-8.500" y="0" width="11" height="8" fill="#3a6db5" stroke="#1f4788" stroke-width="1" stroke-dasharray="1.200 0.800"/><circle cx="-3" cy="-4.500" r="4" fill="#f09838" stroke="#d07010" stroke-width="1.200" stroke-dasharray="1.200 0.800"/><path d="M-4.500 0l1.500 3 1.500-3" stroke="#cde" stroke-width="0.800" fill="none"/></g><g transform="translate(57.5,118.5)"><path d="M-9 -9.500h4v4l-1 2 1 3-1 3 1 3v4h-4v-4l1-3-1-3 1-3-1-2z" fill="#fff" stroke="#444" stroke-width="0.900"/><path d="M-6 -3c2-6 8-7 10-1" fill="none" stroke="#999" stroke-width="0.900"/><path d="M4.500 -5c2 3 3.500 5 3 8l-2 2h-3l-2-2c-0.500-3 1.500-5 4-8z" fill="#f8e860" stroke="#c0a010" stroke-width="0.900"/><path d="M4.500 -3v6" stroke="#222" stroke-width="1"/><rect x="2.800" y="5.500" width="3.500" height="5" fill="#3a6db5" stroke="#1f4788" stroke-width="0.800"/></g><g transform="translate(96.5,118.5)"><path d="M5 -5l-9 10c-1 1-2 3-3 5" fill="none" stroke="#3a6db5" stroke-width="2.600" stroke-linecap="round"/><path d="M4 -4l-8 9" stroke="#9bd" stroke-width="0.800"/><path d="M2 -6l5 4" stroke="#111" stroke-width="2.200" stroke-linecap="round"/><circle cx="6.500" cy="-7.500" r="3" fill="#223"/><circle cx="-6.500" cy="8" r="1.800" fill="#3a6db5"/></g><g transform="translate(19,149)"><path d="M2 3l7 7" stroke="#666" stroke-width="3" stroke-linecap="round"/><circle cx="-2" cy="-2" r="7" fill="#b8cce8" stroke="#999" stroke-width="1.600"/><path d="M-7 -3c1-3 5-5 9-3" fill="none" stroke="#e8f0ff" stroke-width="1.500"/></g><g transform="translate(57.5,149)"><path d="M0 -7l-6 13M0 -7l6 13" stroke="#1f4788" stroke-width="1.800" fill="none"/><path d="M-6 6c-2-3-1-6 1-8M6 6c2-3 1-6-1-8" fill="none" stroke="#1f4788" stroke-width="1.300"/><circle cx="0" cy="-7" r="2.200" fill="#9ab4dc" stroke="#1f4788" stroke-width="0.900"/><circle cx="0" cy="2" r="2.300" fill="#dde" stroke="#555" stroke-width="0.900"/><path d="M5 3v6" stroke="#555" stroke-width="1.500"/><rect x="-1.200" y="-11" width="2.400" height="3" fill="#1f4788"/></g><g transform="translate(96.5,149)"><path d="M0 -9l3.500 4h-2.200v3.700h3.700v-2.200l4 3.500-4 3.500v-2.200h-3.700v3.700h2.200l-3.500 4-3.500-4h2.200v-3.700h-3.700v2.200l-4-3.500 4-3.500v2.200h3.700v-3.700h-2.200z" fill="#5a8cd0" stroke="#2a58a0" stroke-width="0.900"/></g><g transform="translate(19,179)"><rect x="-5" y="-3.500" width="10" height="8" fill="#f4f4f4" stroke="#999" stroke-width="0.900"/><path d="M0 -10l2 2.500h-4zM0 10.500l2-2.500h-4zM-10.500 0l2.500-2v4zM10.500 0l-2.500-2v4z" fill="#111"/><path d="M0 -8v3M0 8v-2.500M-8 0h2M8 0h-2" stroke="#111" stroke-width="1.200"/></g><g transform="translate(57.5,179)"><path d="M-9 8l13-14c1 3 0 5-2 7z" fill="#eee" stroke="#777" stroke-width="0.900"/><path d="M4 -6l5-2-6 9" fill="none" stroke="#999" stroke-width="1"/><path d="M-9 8l6-2" stroke="#555" stroke-width="1"/></g><g transform="translate(96.5,179)"><rect x="-4" y="-9.500" width="11" height="8" fill="#3a6db5" stroke="#1f4788" stroke-width="0.900"/><path d="M-7 1l7-5.500 7.500 7-7 5.500z" fill="#4a7cc4" stroke="#1f4788" stroke-width="0.900"/><path d="M7.500 -8.500c2 0.500 3 2 2.500 4l1.500 0-2.500 3-2-3.200h1.500c0.200-1-0.500-2-1.500-2.300zM-9.500 5l2.500-3 2 3.200h-1.500c0 1.200 0.800 2 2 2v1.500c-2.200 0-3.700-1.500-3.500-3.700z" fill="#fff" stroke="#1f4788" stroke-width="0.700"/></g><g transform="translate(19,209)"><rect x="-9.500" y="-9.500" width="7" height="7" fill="#7aa0d8" stroke="#1f4788" stroke-width="1"/><rect x="-6" y="-6" width="15.500" height="15.500" fill="#4a7cc4" stroke="#1f4788" stroke-width="1.200"/><path d="M-8 -8l12 12" stroke="#fff" stroke-width="1.300"/><path d="M5.500 5.500l-1-4.500-3.500 3.500z" fill="#fff"/><path d="M-6 -6h9M-6 -6v9" stroke="#cde" stroke-width="0.700" stroke-dasharray="1 1"/></g><g transform="translate(57.5,209)"><path d="M-5 -8h9l4 13h-12z" fill="#4a7cc4" stroke="#1f4788" stroke-width="1"/><path d="M-5 -8l-1 13" stroke="#1f4788" stroke-width="1"/><path d="M-10 6.500h4v-2l3.500 3-3.500 3v-2h-4z" fill="#fff" stroke="#1f4788" stroke-width="0.800"/></g><g transform="translate(96.5,209)"><path d="M-4.500 -8h9l5.500 12h-20z" fill="#5a88cc" stroke="#1f4788" stroke-width="1"/><path d="M-10 4h20v5h-20z" fill="#3a68b0" stroke="#1f4788" stroke-width="0.900"/><path d="M-9 9.500v-4l4 4zM9 9.500v-4l-4 4z" fill="#fff"/></g><g transform="translate(19,239)"><path d="M-10 -7l8 -1.500v17l-8 -1.500z" fill="#3a68b0" stroke="#1f4788" stroke-width="0.900"/><path d="M-2 -8.500l11 -2v21l-11-2z" fill="#4a7cc4" stroke="#1f4788" stroke-width="0.900"/><path d="M-7 0l3.500-3v2h6v-2l3.500 3-3.500 3v-2h-6v2z" fill="#fff"/></g><g transform="translate(57.5,239)"><path d="M-7 -6l6 -3 8 4-1 12-8-4-5 3z" fill="none" stroke="#6a8cc0" stroke-width="1"/><path d="M-7 -6l7 5 7-4M0 -1l-2 4" stroke="#6a8cc0" stroke-width="0.900" fill="none"/><g fill="#4a80d0" stroke="#1f4788" stroke-width="0.900"><circle cx="-7" cy="-6" r="2.500"/><circle cx="-1" cy="-9" r="2.300"/><circle cx="7" cy="-5" r="2.500"/><circle cx="6" cy="7" r="2.500"/><circle cx="-2" cy="3" r="2.500"/><circle cx="-7" cy="6" r="2.500"/><circle cx="0" cy="-1" r="2.300"/></g></g><g transform="translate(96.5,239)"><text x="0" y="9.500" text-anchor="middle" font-family="Liberation Sans, sans-serif" font-weight="bold" font-size="27" fill="#1a1a1a">A</text></g><g transform="translate(19,269)"><path d="M-7 -3l9-5 8 9-10 7z" fill="#f4f4f4" stroke="#777" stroke-width="1"/><path d="M-2 -5c0-5 7-6 7 0" fill="none" stroke="#777" stroke-width="1.200"/><path d="M-7 -3c-3 0-3.500 3-3 9" fill="none" stroke="#5a88cc" stroke-width="2"/><circle cx="1" cy="0" r="1.300" fill="#888"/></g><g transform="translate(57.5,269)"><rect x="-8.500" y="-8.500" width="17" height="17" fill="url(#tgr)" stroke="#555" stroke-width="1.300"/></g><g transform="translate(96.5,269)"><path d="M-8 9l2-5 11-12 3 3-11 12z" fill="#e8a030" stroke="#9a5a10" stroke-width="0.800"/><path d="M5 -8l3 3 1.500-1.500c0.500-1.500-1.500-3.500-3-3z" fill="#e05050" stroke="#902020" stroke-width="0.600"/><path d="M-8 9l2-5 3 3z" fill="#f0d8b0" stroke="#9a5a10" stroke-width="0.600"/><path d="M-8 9l1-2.200 1.200 1.200z" fill="#222"/></g><g transform="translate(19,299)"><path d="M8 -10c1.500 0 2 1 1 3l-9 11-3-2.500z" fill="#c87830" stroke="#8a4a10" stroke-width="0.700"/><path d="M-3 1.500l3 2.500-2 2.500-3-2.500z" fill="#ccc" stroke="#666" stroke-width="0.600"/><path d="M-5 4l3 2.500c-2 3-5 3.500-9 4 3-1.500 4-3 6-6.500z" fill="#111"/></g><g transform="translate(57.5,299)"><path d="M-8 2l5-8h12l-4 8z" fill="#f0a0a0" stroke="#e03040" stroke-width="1.200"/><path d="M-8 2h13v4.500h-13z" fill="#f8c0c0" stroke="#e03040" stroke-width="1.200"/><path d="M5 2l4-8v4.500l-4 8z" fill="#e88888" stroke="#e03040" stroke-width="1.200"/></g><g transform="translate(96.5,299)"><path d="M8 -9l-10 11" stroke="#222" stroke-width="3.200" stroke-linecap="round"/><path d="M-2 2l-3 3.500" stroke="#999" stroke-width="2"/><path d="M-5.500 6l-3.500 4" stroke="#6a9ad8" stroke-width="1.200" stroke-dasharray="1 1"/><path d="M1 2c3 0 4 2 3 4s2 3 5 1" fill="none" stroke="#888" stroke-width="1.300"/></g><g transform="translate(19,329)"><path d="M-8 -2h11l1.500 9h-14z" fill="#3a62a8" stroke="#1a2f60" stroke-width="1"/><path d="M-8 1h11" stroke="#8ab" stroke-width="1.500"/><rect x="-6.500" y="-8.500" width="8" height="6.500" rx="2.500" fill="#333" stroke="#111"/><path d="M5 7l5-4M7 9l3-1M6 4l2 4" stroke="#3a62a8" stroke-width="1.200"/></g><g transform="translate(57.5,329)"><circle cx="0" cy="-6" r="3" fill="#f4d8a0" stroke="#a87820" stroke-width="1"/><path d="M-2 -3.500h4l1 4h-6z" fill="#f4d8a0" stroke="#a87820" stroke-width="0.900"/><rect x="-7" y="0.500" width="14" height="4" rx="1" fill="#f0c060" stroke="#a87820" stroke-width="0.900"/><rect x="-7.500" y="4.500" width="15" height="4" fill="#f8e8c0" stroke="#a87820" stroke-width="0.900"/><path d="M-3 6.500h6" stroke="#333" stroke-width="1.200"/></g><g transform="translate(96.5,329)"><g stroke="#c8a800" stroke-width="0.900" fill="#f0d428"><rect x="-11" y="-4.500" width="22" height="9" rx="4" transform="rotate(45)"/><rect x="-11" y="-4.500" width="22" height="9" rx="4" transform="rotate(-45)"/></g><rect x="-3.500" y="-3.500" width="7" height="7" transform="rotate(45)" fill="#f8e868" stroke="#c8a800" stroke-width="0.600"/></g><g transform="translate(19,359)"><path d="M-9 -1l15-3 3 13-16 2z" fill="#4a7cc4" stroke="#1f4788" stroke-width="1"/><circle cx="-3" cy="-7" r="2.500" fill="#f4d8a0" stroke="#a87820" stroke-width="0.900"/><rect x="-9" y="-3" width="12" height="3.500" rx="1" fill="#f0c060" stroke="#a87820" stroke-width="0.900"/><rect x="-9.500" y="0.500" width="13" height="3.500" fill="#f8e8c0" stroke="#a87820" stroke-width="0.900"/></g><g transform="translate(57.5,359)"><path d="M0 -9c3 5 6 8 6 11a6 6 0 0 1-12 0c0-3 3-6 6-11z" fill="#a8c4e8" stroke="#5a80b8" stroke-width="1.100"/><path d="M-3 3c0 2 1.500 3 3 3" stroke="#fff" stroke-width="1.200" fill="none"/></g><g transform="translate(96.5,359)"><path d="M-8 7c-1-4 1-8 5-10l6-4c2-1 3 1 1 2l-3 2.500 5 0c3 1 3 5 1 7l-3 3c-2 1-4 0-5-1z" fill="#f4d0a0" stroke="#b07830" stroke-width="1"/><path d="M-8 7l3-3" stroke="#b07830" stroke-width="1"/><circle cx="-1" cy="3" r="2" fill="#d89850"/></g><g transform="translate(19,389)"><circle cx="-3" cy="4" r="6" fill="#444" stroke="#222" stroke-width="1"/><path d="M1 0l7-8" stroke="#333" stroke-width="2.600" stroke-linecap="round"/><path d="M-6 2c1-2 3-3 5-3" stroke="#888" stroke-width="1" fill="none"/></g><rect x="76.500" y="132" width="44.500" height="33" rx="1.500" fill="none" stroke="#ee0c14" stroke-width="4"/><rect x="48" y="422" width="38" height="28" fill="#fff"/><rect x="33" y="408.500" width="36" height="26.500" fill="#000"/><rect x="37.500" y="442.500" width="6" height="6" fill="#fff" stroke="#888" stroke-width="0.800"/><rect x="33" y="438.500" width="6.500" height="6.500" fill="#000"/><path d="M76 410l3-2.500v1.800c3 0 5.500 2 5.500 5.500h1.800l-2.800 3-2.800-3h1.800c0-2-1.500-3.500-3.500-3.500v1.800z" fill="#fff" stroke="#888" stroke-width="0.700"/><rect x="1.500" y="452.500" width="29" height="30" fill="#f6f6f6" stroke="#aaa"/><rect x="7.500" y="460.500" width="17" height="15" rx="1.500" fill="#fafafa" stroke="#888"/><path d="M11 463h3v3h-3zM18 463h3v3h-3zM11.500 466h2v5h-2zM18.500 466h2v5h-2z" fill="#666"/><path d="M10.500 468.500h4v3.500h-4zM17.500 468.500h4v3.500h-4z" fill="none" stroke="#444" stroke-width="0.800"/><rect x="101.500" y="462.500" width="10" height="10" rx="1.500" fill="#f4f4f4" stroke="#777"/><path d="M109 464.500v6l-5.500-3z" fill="#555"/></svg>
<div class="abs tb" style="left:2px;top:484px;font-weight:bold;font-size:12px">Verschieben</div>
<div class="abs tl" style="left:2px;top:505px">Verschieben:</div>
<div class="abs" style="left:67px;top:500px;width:24px;height:22px;border:1px solid #777;border-radius:3px;background:#cfcfcf"></div>
<svg class="abs" style="left:67px;top:500px" width="50" height="22"><rect x="8.500" y="7.500" width="10" height="8" fill="#fafafa" stroke="#666"/><rect x="4.500" y="3.500" width="10" height="8" fill="#fafafa" stroke="#666"/><rect x="6" y="5" width="7" height="3" fill="#d89030"/><rect x="31" y="5.500" width="11" height="10.500" fill="#ee4444"/><rect x="32" y="6.500" width="9" height="4" fill="#f46a6a"/></svg>
<div class="abs tb" style="left:2px;top:527px;font-weight:bold;font-size:12px;width:114px;overflow:hidden">Werkzeugmodus (Umschalt)</div>
<div class="abs" style="left:17px;top:551px;width:10px;height:10px;border-radius:50%;border:1px solid #888;background:radial-gradient(circle at 50% 50%,#111 0 2.200px,#fff 3px)"></div>
<div class="abs tl" style="left:35px;top:550px;width:82px;overflow:hidden">Ebene oder Hilfslinie</div>
<div class="abs" style="left:17px;top:573px;width:10px;height:10px;border-radius:50%;border:1px solid #bbb;background:#fafafa"></div>
<div class="abs tl" style="left:35px;top:572px;width:82px;overflow:hidden">Aktive Ebene verschieben</div>
<div class="abs" style="left:5px;top:976px;width:108px;height:15px;background:#efefef"></div>
<div class="abs sl" style="left:18px;top:976px;width:50px;height:15px;background:linear-gradient(90deg,#f8f8f8,#f0f0f0 60%,#dcdcdc)"></div>
<div class="abs" style="left:40px;top:980px;width:7px;height:7px;border-left:1px solid #bbb;border-right:1px solid #bbb"><div style="margin-left:2px;width:1px;height:7px;background:#bbb"></div></div>
<svg class="abs" style="left:0;top:965px" width="125" height="50"><path d="M11.500 15v7l-4-3.500zM106 15v7l4-3.500z" fill="#333"/><rect x="9" y="33" width="12" height="12" rx="1" fill="#3a5a98" stroke="#223a6a"/><rect x="11" y="33.500" width="8" height="4" fill="#e02020"/><rect x="12" y="40" width="6" height="5" fill="#dde"/><rect x="38" y="33" width="12" height="12" fill="#888" stroke="#666" stroke-dasharray="1 1"/><rect x="40" y="35" width="8" height="8" fill="#a0a088"/><path d="M68 35h10l-1 10.500h-8z" fill="#999" stroke="#777" stroke-width="0.800" stroke-dasharray="1 0.700"/><ellipse cx="73" cy="35" rx="5.300" ry="1.800" fill="#aaa" stroke="#777" stroke-width="0.700"/><path d="M99 36.500v-3h8.500v9.500h-3" fill="none" stroke="#e8c010" stroke-width="2.200"/><path d="M100 37.500l3 2.500-3 2.500" fill="none" stroke="#e8c010" stroke-width="1.800"/><circle cx="99.500" cy="43.500" r="2.200" fill="#4a7cc4" stroke="#1f4788" stroke-width="0.700"/></svg>
<div class="abs menu" style="left:229px;top:18px;width:340px;height:359px"></div>
<div class="abs hl" style="left:235px;top:233px;width:330px;height:19px"></div>
<div class="abs sep" style="left:236px;top:171px;width:327px"></div>
<div class="abs sep" style="left:236px;top:255px;width:327px"></div>
<div class="abs mi" style="left:260px;top:23.0px"><u>N</u>eue Ebene<span style="letter-spacing:-0.9px"> ...</span></div>
<div class="abs mi" style="left:409px;width:150px;text-align:right;top:23.0px">Umschalt+Strg+N</div>
<div class="abs mi" style="left:260px;top:43.0px">N<u>e</u>u aus Sichtbarem</div>
<div class="abs mi" style="left:260px;top:62.5px"><u>N</u>eue Ebenengruppe<span style="letter-spacing:-0.9px"> ...</span></div>
<div class="abs mi" style="left:260px;top:83.5px">Ebene <u>d</u>uplizieren</div>
<div class="abs mi" style="left:409px;width:150px;text-align:right;top:83.5px">Strg+J</div>
<div class="abs mi dis" style="left:260px;top:105.0px">Ebene <u>v</u>erankern</div>
<div class="abs mi dis" style="left:409px;width:150px;text-align:right;top:105.0px">Strg+H</div>
<div class="abs mi" style="left:260px;top:127.0px">Nach un<u>t</u>en vereinen</div>
<div class="abs mi" style="left:409px;width:150px;text-align:right;top:127.0px">Strg+E</div>
<div class="abs mi" style="left:260px;top:149.5px">Ebene <u>l</u>öschen</div>
<div class="abs mi" style="left:260px;top:178.0px"><u>S</u>tapel</div>
<div class="abs arr" style="left:555px;top:182.0px"></div>
<div class="abs mi" style="left:260px;top:196.5px"><u>M</u>aske</div>
<div class="abs arr" style="left:555px;top:200.5px"></div>
<div class="abs mi" style="left:260px;top:216.0px">Tr<u>a</u>nsparenz</div>
<div class="abs arr" style="left:555px;top:220.0px"></div>
<div class="abs mi" style="left:260px;top:234.5px"><u>T</u>ransformation</div>
<div class="abs arr" style="left:555px;top:238.5px"></div>
<div class="abs mi" style="left:260px;top:263.5px">Ebenen<u>g</u>röße<span style="letter-spacing:-0.9px"> ...</span></div>
<div class="abs mi" style="left:260px;top:288.0px">Ebene auf <u>B</u>ildgröße</div>
<div class="abs mi" style="left:260px;top:312.0px">Ebene <u>s</u>kalieren<span style="letter-spacing:-0.9px"> ...</span></div>
<div class="abs mi dis" style="left:260px;top:336.0px">Auf Auswahl <u>z</u>uschneiden</div>
<div class="abs mi" style="left:260px;top:357.5px">Ebene <u>a</u>utomatisch zuschneiden</div>
<div class="abs menu" style="left:568px;top:231px;width:382px;height:183px"></div>
<div class="abs hl" style="left:573px;top:258px;width:374px;height:22px"></div>
<div class="abs sep" style="left:575px;top:284px;width:369px"></div>
<div class="abs sep" style="left:575px;top:388px;width:369px"></div>
<div class="abs mi" style="left:598px;top:237.0px"><u>H</u>orizontal spiegeln</div>
<div class="abs mi" style="left:598px;top:261.0px"><u>V</u>ertikal spiegeln</div>
<div class="abs mi" style="left:598px;top:293.0px">Um 90° im <u>U</u>hrzeigersinn drehen</div>
<div class="abs mi" style="left:598px;top:317.0px">Um 90° <u>g</u>egen den Uhrzeigersinn drehen</div>
<div class="abs mi" style="left:598px;top:341.0px">Um <u>1</u>80° drehen</div>
<div class="abs mi" style="left:598px;top:365.5px"><u>B</u>eliebig drehen<span style="letter-spacing:-0.9px"> ...</span></div>
<div class="abs mi" style="left:598px;top:395.0px"><u>V</u>ersatz<span style="letter-spacing:-0.9px"> ...</span></div>
<div class="abs mi" style="left:790px;width:150px;text-align:right;top:395.0px">Umschalt+Strg+O</div>
<div class="abs" style="left:770px;top:290px;width:145px;height:45px;border:1px solid #2a2a2a;background:linear-gradient(#f4f4f4,#e2e2e2);box-shadow:2px 2px 3px rgba(0,0,0,.45)"></div>
<div class="abs" style="left:773px;top:292px;font-size:13px;letter-spacing:-0.1px;color:#333;white-space:pre">Vertikal spiegeln</div>
<div class="abs" style="left:773px;top:321px;font-size:10.5px;font-style:italic;color:#222;white-space:pre">Drücken Sie F1 für mehr Hilfe</div>
<svg class="abs" style="left:0;top:0" width="1920" height="1015" viewBox="0 0 1920 1015"><g transform="translate(244,31)"><path d="M-5.500 -8h7l4 4v12h-11z" fill="#fdfdfd" stroke="#b8b8b8" stroke-width="0.900"/><path d="M1.500 -8v4h4" fill="#eee" stroke="#b8b8b8" stroke-width="0.700"/></g><g transform="translate(244,70.5)"><path d="M-7.500 -6.500h5l1.500 2h8v11h-14.500z" fill="#d4d8bc" stroke="#a4a88c" stroke-width="0.900"/><path d="M-6 -1.500h14.500l-1.500 8h-14.500z" fill="#e8ead6" stroke="#a4a88c" stroke-width="0.800"/></g><g transform="translate(244,91.5)"><rect x="-3" y="-3" width="11" height="10" fill="#8a98b0" stroke="#56627a" stroke-width="0.900"/><rect x="-7.500" y="-7.500" width="11" height="10" fill="#3c4a68" stroke="#26324a" stroke-width="0.900"/><rect x="-5.500" y="-5.500" width="7" height="3.500" fill="#9ab"/></g><g transform="translate(244,112.5)"><g fill="none" stroke="#888" stroke-width="1.600" stroke-dasharray="1 0.800"><path d="M0 -5v11M-6.500 1c0 3.500 3 5.500 6.500 5.500s6.500-2 6.500-5.500"/><circle cx="0" cy="-6" r="1.500"/></g></g><g transform="translate(244,135)"><g fill="#e8e8e8" stroke="#888" stroke-width="0.800"><path d="M-8 5l2.500-3h8l-2.500 3z"/><path d="M-8 2l2.500-3h8l-2.500 3z"/><path d="M-8 -1l2.500-3h8l-2.500 3z"/></g><path d="M6 -6v9M3.500 1l2.500 3.500 2.500-3.500" fill="none" stroke="#1f4788" stroke-width="1.400"/></g><g transform="translate(244,157.5)"><path d="M-5.500 -4h11l-1 11.500h-9z" fill="#6a6a6a" stroke="#333" stroke-width="0.900"/><ellipse cx="0" cy="-4.500" rx="6" ry="2.500" fill="#8a8a8a" stroke="#333" stroke-width="0.900"/><ellipse cx="0" cy="-4.500" rx="3.600" ry="1.200" fill="#333"/><path d="M-3 0v6" stroke="#999" stroke-width="1"/></g><g transform="translate(244,271.5)"><rect x="-7.500" y="-7.500" width="15" height="15" fill="none" stroke="#777" stroke-width="0.800" stroke-dasharray="1 1.200"/><rect x="-7.500" y="-7.500" width="7" height="6" fill="#3a6db5" stroke="#1f4788" stroke-width="0.900"/><path d="M1.500 3h5M4 0.500v5M1.500 7h5" stroke="#111" stroke-width="1.100"/></g><g transform="translate(244,296)"><rect x="-3.500" y="-3.500" width="7" height="7" fill="#f0f0f0" stroke="#999" stroke-width="0.900"/><g stroke="#1f4788" stroke-width="1.100" fill="none"><path d="M-8 -5v-3h3M8 -5v-3h-3M-8 5v3h3M8 5v3h-3"/><path d="M-8 -8l3 3M8 -8l-3 3M-8 8l3-3M8 8l-3-3" stroke-width="0.900"/></g></g><g transform="translate(244,320)"><rect x="-7.500" y="-7.500" width="15" height="15" fill="none" stroke="#999" stroke-width="0.800" stroke-dasharray="1 1.200"/><rect x="-7.500" y="-7.500" width="7" height="6" fill="#3a6db5" stroke="#1f4788" stroke-width="0.900"/><path d="M0 -0.500l6 6M6.500 6v-3.500M6.500 6h-3.500" stroke="#222" stroke-width="1.100" fill="none"/></g><g transform="translate(244,344)"><path d="M-8 7l12-13c1 3 0 6-3 8z" fill="#bbb" stroke="#999" stroke-width="0.800" stroke-dasharray="1 0.700"/></g><g transform="translate(582,245)"><path d="M-8 0l4.500-4v2.500h7v-2.500l4.500 4-4.500 4v-2.500h-7v2.500z" fill="#8ab4e8" stroke="#3a6db5" stroke-width="1"/></g><g transform="translate(582,269)"><path d="M0 -8l4 4.500h-2.500v7h2.500l-4 4.500-4-4.500h2.500v-7h-2.500z" fill="#8ab4e8" stroke="#3a6db5" stroke-width="1"/></g><g transform="translate(582,301)"><path d="M-6 -6h5c3 0 5 2 5 5v1h2.500l-4.500 5.500-4.500-5.500h2.500v-1c0-1-0.500-1.500-1.500-1.500h-4.500z" fill="#4a7cc4" stroke="#1f4788" stroke-width="0.900"/></g><g transform="translate(582,325)"><path d="M6 -6h-5c-3 0-5 2-5 5v1h-2.500l4.500 5.500 4.500-5.500h-2.500v-1c0-1 0.500-1.500 1.500-1.500h4.500z" fill="#4a7cc4" stroke="#1f4788" stroke-width="0.900"/></g><g transform="translate(582,349)"><path d="M-3 -7h2c4 0 6.500 2.500 6.500 6s-2.500 6-6.500 6h-1v2.500l-5-4.500 5-4.500v2.500h1c1.500 0 2.500-1 2.500-2s-1-2.500-2.500-2.500h-2z" fill="#6a9ad8" stroke="#3a6db5" stroke-width="0.900"/></g><g transform="translate(582,373.5)"><rect x="-7.500" y="-8" width="10" height="7" fill="#3a6db5" stroke="#1f4788" stroke-width="0.900"/><rect x="-5" y="-3" width="11" height="8" transform="rotate(38)" fill="#5a8cd0" stroke="#1f4788" stroke-width="0.900"/><path d="M-8 6c0-2 1-3 2.500-3.500" fill="none" stroke="#ccd" stroke-width="1.500"/></g><rect x="233.500" y="79.500" width="129" height="24" rx="1" fill="none" stroke="#e8121a" stroke-width="3"/></svg>
<div id="mb"><span style="left:5px"><u>D</u>atei</span><span style="left:43px">Bearbeite<u>n</u></span><span style="left:107px"><u>A</u>uswahl</span><span style="left:160px">An<u>s</u>icht</span><span style="left:206px"><u>B</u>ild</span><span class="op" style="left:234px"><u>E</u>bene</span><span style="left:276px"><u>F</u>arben</span><span style="left:322px"><u>W</u>erkzeuge</span><span style="left:388px">Filte<u>r</u></span><span style="left:424px">Script-Fu</span><span style="left:479px"><u>F</u>enster</span><span style="left:528px"><u>H</u>ilfe</span><i style="left:229px"></i><i style="left:269px"></i></div>
</body></html>
